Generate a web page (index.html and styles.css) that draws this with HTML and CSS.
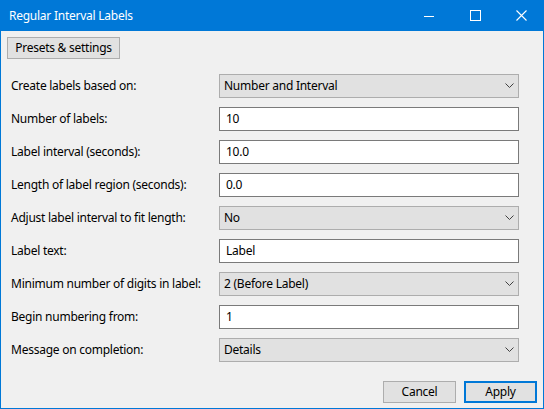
FILE: index.html
```html
<!DOCTYPE html>
<html>
<head>
<meta charset="utf-8">
<link rel="stylesheet" href="styles.css">
</head>
<body>
<div class="window">
  <div class="titlebar">
    <span class="title">Regular Interval Labels</span>
    <div class="caption">
      <span class="cbtn"><svg width="10" height="10" viewBox="0 0 10 10"><path d="M0 5.5H10" stroke="#fff" stroke-width="1"/></svg></span>
      <span class="cbtn"><svg width="11" height="11" viewBox="0 0 11 11"><rect x="0.5" y="0.5" width="10" height="10" fill="none" stroke="#fff" stroke-width="1"/></svg></span>
      <span class="cbtn"><svg width="11" height="11" viewBox="0 0 11 11"><path d="M0.5 0.5L10.5 10.5M10.5 0.5L0.5 10.5" stroke="#fff" stroke-width="1.1"/></svg></span>
    </div>
  </div>
  <div class="content">
    <div class="top"><button class="btn presets">Presets &amp; settings</button></div>
    <div class="form">
      <div class="row"><span class="lbl">Create labels based on:</span><div class="choice">Number and Interval<svg class="chev" width="9" height="5" viewBox="0 0 9 5"><path d="M0.5 0.5L4.5 4.5L8.5 0.5" fill="none" stroke="#404040" stroke-width="1"/></svg></div></div>
      <div class="row"><span class="lbl">Number of labels:</span><div class="text">10</div></div>
      <div class="row"><span class="lbl">Label interval (seconds):</span><div class="text">10.0</div></div>
      <div class="row"><span class="lbl">Length of label region (seconds):</span><div class="text">0.0</div></div>
      <div class="row"><span class="lbl">Adjust label interval to fit length:</span><div class="choice">No<svg class="chev" width="9" height="5" viewBox="0 0 9 5"><path d="M0.5 0.5L4.5 4.5L8.5 0.5" fill="none" stroke="#404040" stroke-width="1"/></svg></div></div>
      <div class="row"><span class="lbl">Label text:</span><div class="text">Label</div></div>
      <div class="row"><span class="lbl">Minimum number of digits in label:</span><div class="choice">2 (Before Label)<svg class="chev" width="9" height="5" viewBox="0 0 9 5"><path d="M0.5 0.5L4.5 4.5L8.5 0.5" fill="none" stroke="#404040" stroke-width="1"/></svg></div></div>
      <div class="row"><span class="lbl">Begin numbering from:</span><div class="text">1</div></div>
      <div class="row"><span class="lbl">Message on completion:</span><div class="choice">Details<svg class="chev" width="9" height="5" viewBox="0 0 9 5"><path d="M0.5 0.5L4.5 4.5L8.5 0.5" fill="none" stroke="#404040" stroke-width="1"/></svg></div></div>
    </div>
    <div class="actions">
      <button class="btn">Cancel</button>
      <button class="btn default">Apply</button>
    </div>
  </div>
</div>
</body>
</html>
```

FILE: styles.css
```css
* { box-sizing: border-box; }
html, body { margin: 0; padding: 0; }
body {
  font-family: "Noto Sans", "Open Sans", sans-serif;
  font-size: 12px;
  letter-spacing: -0.25px;
  color: #000;
  background: #f0f0f0;
}
.window {
  width: 544px;
  height: 409px;
  border: 1px solid #0078d7;
  border-top: none;
  background: #f0f0f0;
  display: flex;
  flex-direction: column;
}
.titlebar {
  height: 31px;
  margin: 0 -1px;
  background: #0078d7;
  color: #fff;
  display: flex;
  align-items: center;
  padding-left: 9px;
}
.title { flex: 1; font-size: 12px; padding-bottom: 1px; }
.caption { display: flex; height: 31px; }
.cbtn {
  width: 46px;
  display: flex;
  align-items: center;
  justify-content: center;
}
.content {
  flex: 1;
  padding: 6px 6px 0 6px;
  display: flex;
  flex-direction: column;
}
.btn {
  font-family: inherit;
  font-size: 12px;
  letter-spacing: -0.25px;
  color: #000;
  background: #e1e1e1;
  border: 1px solid #adadad;
  height: 22px;
  padding: 0;
  margin: 0;
  line-height: 18px;
}
.presets { width: 113px; }
.form {
  margin-top: 15px;
  display: flex;
  flex-direction: column;
  gap: 9px;
}
.row {
  display: flex;
  align-items: center;
  height: 24px;
}
.lbl { width: 212px; padding-left: 4px; padding-bottom: 1px; }
.choice, .text {
  width: 300px;
  height: 24px;
  display: flex;
  align-items: center;
  position: relative;
  padding-bottom: 1px;
}
.choice {
  background: #e1e1e1;
  border: 1px solid #adadad;
  padding-left: 4px;
}
.text {
  background: #fff;
  border: 1px solid #7a7a7a;
  padding-left: 6px;
}
.chev {
  position: absolute;
  right: 4px;
  top: 8px;
}
.actions {
  margin-top: 19px;
  display: flex;
  justify-content: flex-end;
  gap: 8px;
}
.actions .btn { width: 73px; }
.default { border: 2px solid #0078d7; }
```
